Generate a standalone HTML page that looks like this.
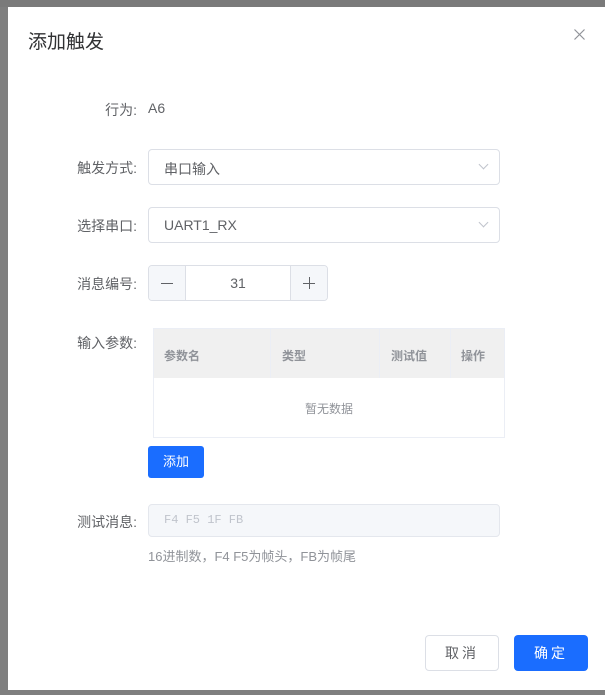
<!DOCTYPE html>
<html><head><meta charset="utf-8"><style>
*{box-sizing:border-box;margin:0;padding:0}
body{width:605px;height:695px;background:#7f7f7f;position:relative;overflow:hidden;font-family:"Liberation Sans","Noto Sans CJK SC",sans-serif;color:#606266;font-size:14px}
.a{position:absolute}
.dlg{left:8px;top:7px;width:620px;height:683px;background:#fff}
.lbl{position:absolute;right:468px;font-size:14px;color:#606266;text-align:right;white-space:nowrap}
.inp{position:absolute;left:148px;border:1px solid #dcdfe6;border-radius:4px;background:#fff}
.chev{position:absolute;right:12px;top:11px;width:7px;height:7px;border-right:1px solid #c0c4cc;border-bottom:1px solid #c0c4cc;transform:rotate(45deg)}
.mono{font-family:"Liberation Mono","DejaVu Sans Mono",monospace}
</style></head><body>
<div class="a" style="left:0;top:0;width:605px;height:7px;background:#7a7a7a"></div>
<div class="a dlg"></div>
<div class="a" style="left:28px;top:27px;font-size:19px;color:#303133">添加触发</div>
<svg class="a" style="left:574px;top:29px" width="11" height="11"><path d="M0.5 0.5L10.5 10.5M10.5 0.5L0.5 10.5" stroke="#909399" stroke-width="1.2"/></svg>

<div class="lbl" style="top:100px">行为:</div>
<div class="a" style="left:148px;top:100px;color:#606266">A6</div>

<div class="lbl" style="top:158px">触发方式:</div>
<div class="inp" style="top:149px;width:352px;height:36px"><span class="a" style="left:15px;top:9px">串口输入</span><i class="chev"></i></div>

<div class="lbl" style="top:216px">选择串口:</div>
<div class="inp" style="top:207px;width:352px;height:36px"><span class="a" style="left:15px;top:9px">UART1_RX</span><i class="chev"></i></div>

<div class="lbl" style="top:274px">消息编号:</div>
<div class="inp" style="top:265px;width:180px;height:36px;overflow:hidden">
<div class="a" style="left:0;top:0;width:37px;height:34px;background:#f5f7fa;border-right:1px solid #dcdfe6"></div>
<div class="a" style="left:12px;top:17px;width:12px;height:1px;background:#606266"></div>
<div class="a" style="right:0;top:0;width:37px;height:34px;background:#f5f7fa;border-left:1px solid #dcdfe6"></div>
<div class="a" style="right:12px;top:17px;width:12px;height:1px;background:#606266"></div>
<div class="a" style="right:17px;top:11px;width:1px;height:12px;background:#606266"></div>
<div class="a" style="left:37px;width:104px;top:9px;text-align:center;color:#606266">31</div>
</div>

<div class="lbl" style="top:333px">输入参数:</div>
<div class="a" style="left:153px;top:328px;width:352px;height:110px;border:1px solid #ebeef5;font-size:12px;color:#909399;font-weight:bold">
<div class="a" style="left:0;top:0;width:350px;height:49px;background:#f0f0f0"></div>
<div class="a" style="left:116px;top:0;width:1px;height:49px;background:#ebeef5"></div>
<div class="a" style="left:225px;top:0;width:1px;height:49px;background:#ebeef5"></div>
<div class="a" style="left:296px;top:0;width:1px;height:49px;background:#ebeef5"></div>
<div class="a" style="left:10px;top:18px">参数名</div>
<div class="a" style="left:128px;top:18px">类型</div>
<div class="a" style="left:237px;top:18px">测试值</div>
<div class="a" style="left:307px;top:18px">操作</div>
<div class="a" style="left:0;width:350px;top:71px;text-align:center;font-weight:normal">暂无数据</div>
</div>
<div class="a" style="left:148px;top:446px;width:56px;height:32px;background:#1a6dff;border-radius:3px;color:#fff;font-size:13px;text-align:center;line-height:32px">添加</div>

<div class="lbl" style="top:512px">测试消息:</div>
<div class="inp" style="top:504px;width:352px;height:33px;background:#f5f7fa;border-color:#e4e7ed"><span class="a mono" style="left:15px;top:8px;font-size:12px;color:#c0c4cc">F4 F5 1F FB</span></div>
<div class="a" style="left:148px;top:546px;color:#909399;font-size:13px">16进制数，F4 F5为帧头，FB为帧尾</div>

<div class="a" style="left:425px;top:635px;width:74px;height:36px;border:1px solid #dcdfe6;border-radius:4px;text-align:center;line-height:34px;color:#606266;letter-spacing:3px">取消</div>
<div class="a" style="left:514px;top:635px;width:74px;height:36px;background:#1a6dff;border-radius:4px;text-align:center;line-height:36px;color:#fff;letter-spacing:3px">确定</div>
</body></html>
